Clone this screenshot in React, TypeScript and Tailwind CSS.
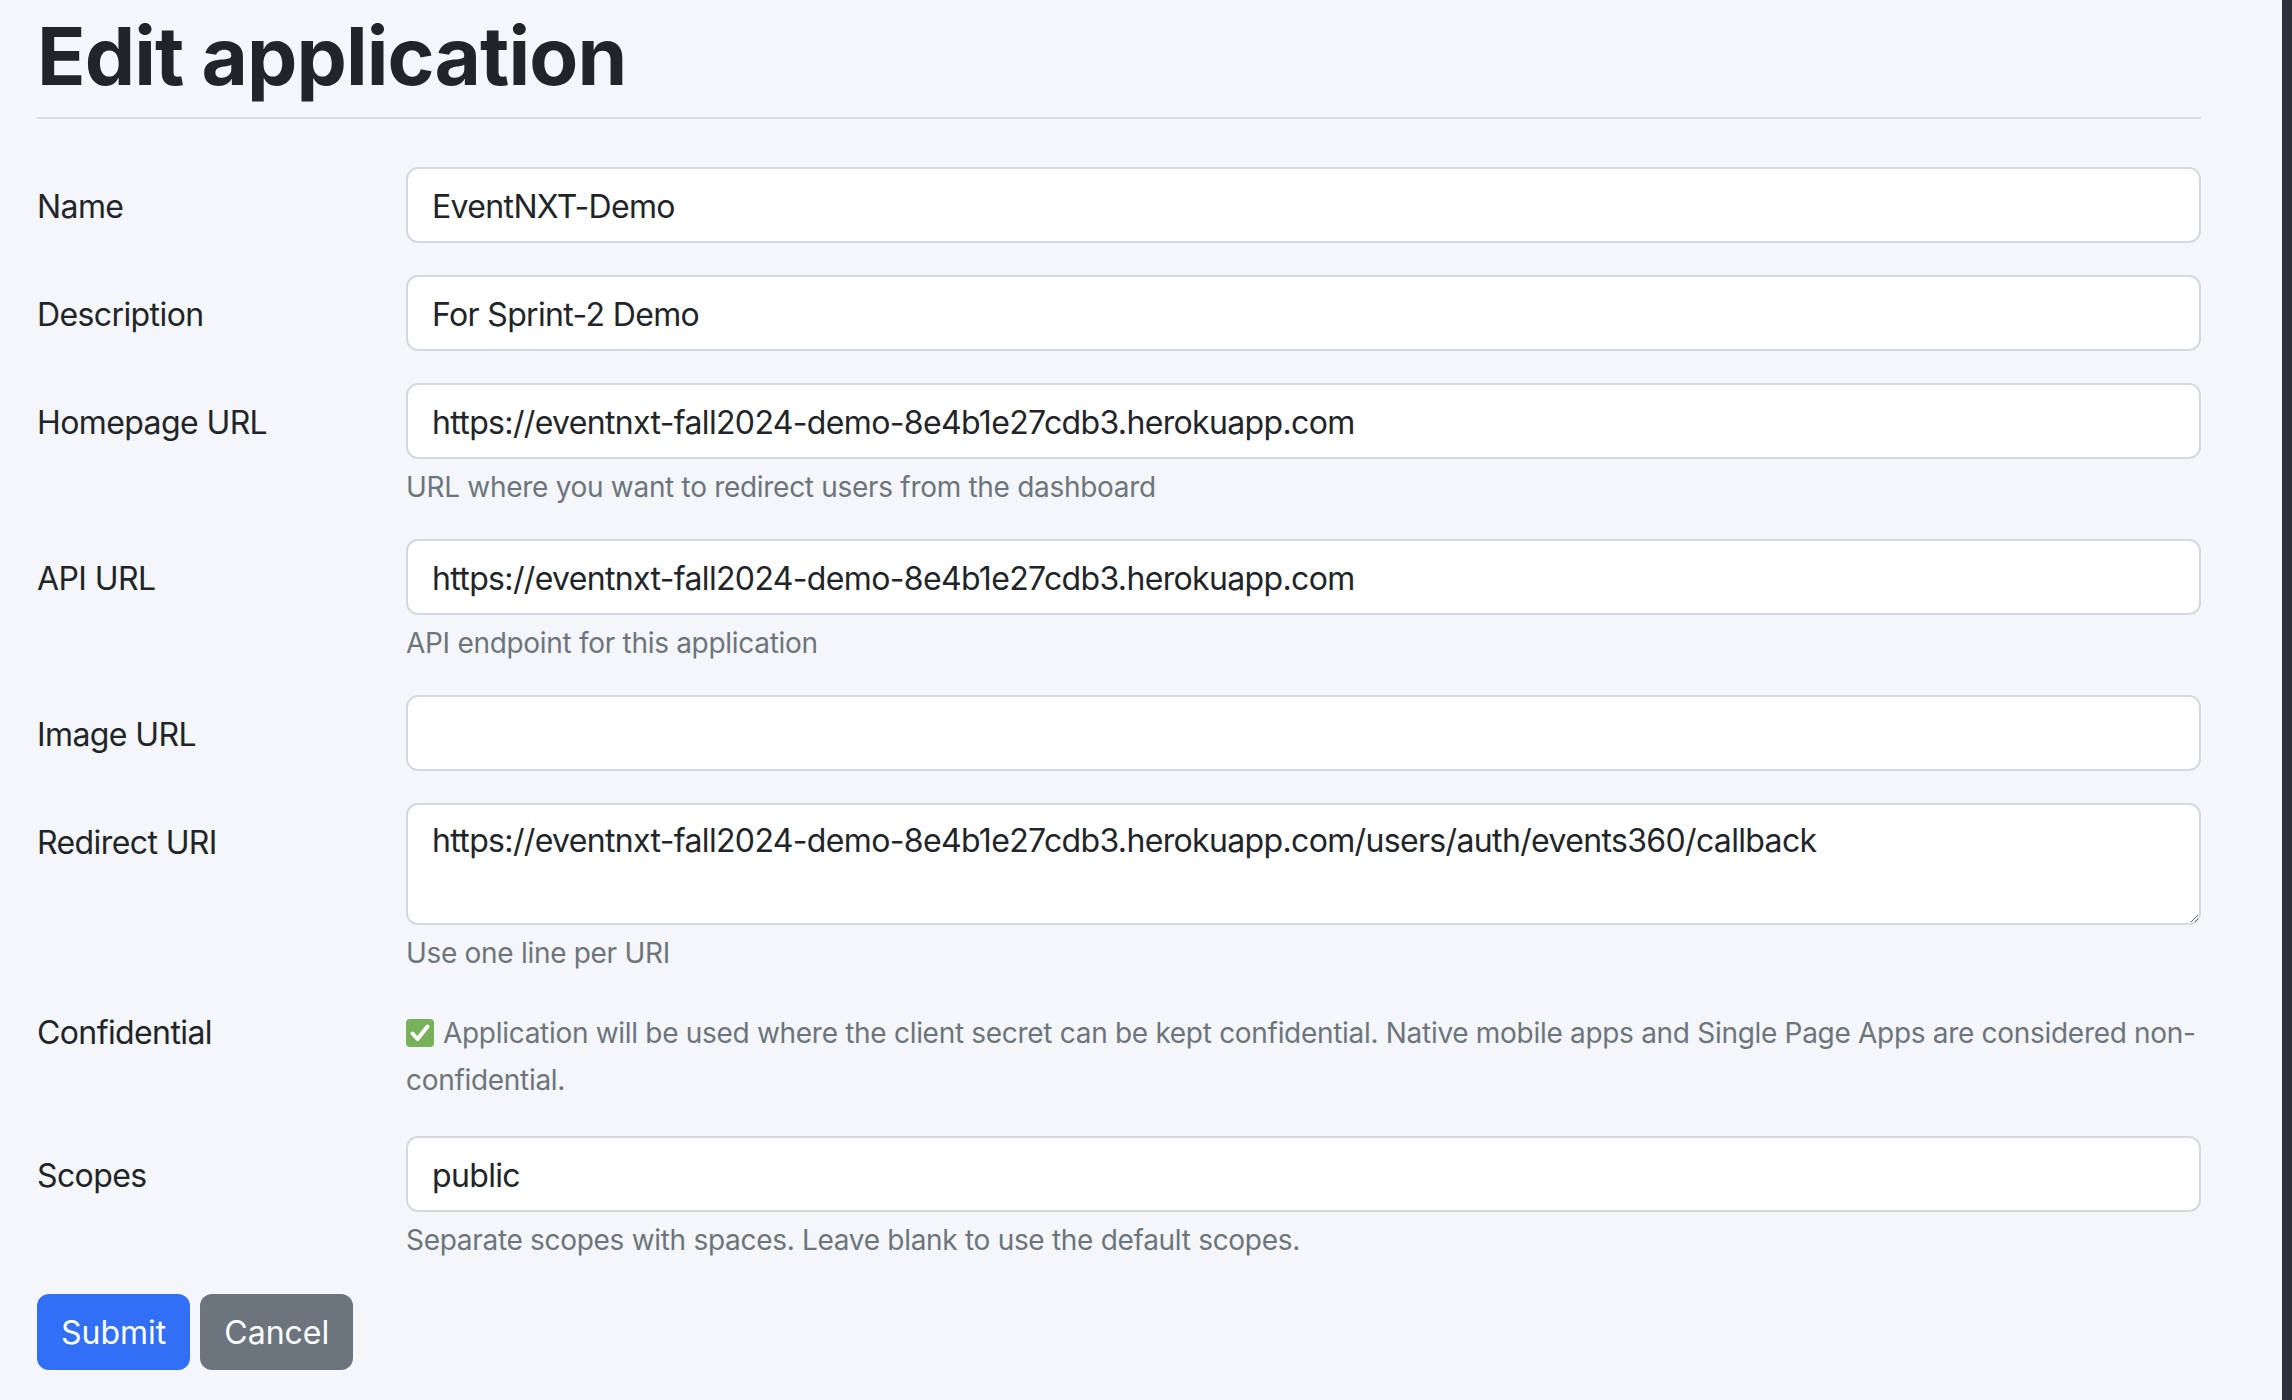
import React from "react";

const font = { fontFamily: 'Inter, "Noto Sans", sans-serif' };

function Row({
  label,
  children,
  labelTop = "pt-[16px]",
}: {
  label: string;
  children: React.ReactNode;
  labelTop?: string;
}) {
  return (
    <div className="flex items-start mb-[32px]">
      <div className={`w-[369px] shrink-0 ${labelTop} text-[32px] leading-[48px] tracking-[-0.6px] text-[#212529]`}>{label}</div>
      <div className="flex-1 min-w-0">{children}</div>
    </div>
  );
}

function TextInput({ value }: { value: string }) {
  return (
    <input
      type="text"
      defaultValue={value}
      className="block w-full h-[76px] rounded-[12px] border-2 border-[#d5d8dd] bg-white px-[24px] pt-[2px] text-[32px] leading-[48px] tracking-[-0.65px] text-[#212529] outline-none"
      style={font}
    />
  );
}

function Help({ children }: { children: React.ReactNode }) {
  return <div className="mt-[8px] text-[28px] leading-[40px] tracking-[-0.3px] text-[#6c757d]">{children}</div>;
}

function CheckEmoji() {
  return (
    <svg width="28" height="28" viewBox="0 0 28 28" className="inline-block align-[-4px] mr-[9px]">
      <rect x="0" y="0" width="28" height="28" rx="4" fill="#78b159" />
      <path d="M6.5 14.5 L11.5 20 L21.5 7.5" fill="none" stroke="#ffffff" strokeWidth="4" strokeLinecap="round" strokeLinejoin="round" />
    </svg>
  );
}

export default function App() {
  return (
    <div className="min-h-[1400px] w-full bg-[#f5f6fa] flex" style={font}>
      <div className="flex-1 pl-[37px]">
        <div className="w-[2164px]">
          <h1 className="mt-[8px] text-[80px] leading-[96px] font-bold text-[#212529] tracking-[-0.9px]">
            Edit application
          </h1>
          <div className="mt-[13px] h-[2px] bg-[#dcdee2]" />
          <form className="mt-[48px]" onSubmit={(e) => e.preventDefault()}>
            <Row label="Name">
              <TextInput value="EventNXT-Demo" />
            </Row>
            <Row label="Description">
              <TextInput value="For Sprint-2 Demo" />
            </Row>
            <Row label="Homepage URL">
              <TextInput value="https://eventnxt-fall2024-demo-8e4b1e27cdb3.herokuapp.com" />
              <Help>URL where you want to redirect users from the dashboard</Help>
            </Row>
            <Row label="API URL">
              <TextInput value="https://eventnxt-fall2024-demo-8e4b1e27cdb3.herokuapp.com" />
              <Help>API endpoint for this application</Help>
            </Row>
            <Row label="Image URL">
              <TextInput value="" />
            </Row>
            <Row label="Redirect URI">
              <textarea
                defaultValue="https://eventnxt-fall2024-demo-8e4b1e27cdb3.herokuapp.com/users/auth/events360/callback"
                className="block w-full h-[122px] rounded-[12px] border-2 border-[#d5d8dd] bg-white px-[24px] py-[12px] text-[32px] leading-[48px] tracking-[-0.65px] text-[#212529] outline-none"
                style={font}
              />
              <Help>Use one line per URI</Help>
            </Row>
            <Row label="Confidential" labelTop="pt-[4px]">
              <div className="text-[28px] leading-[47px] tracking-[-0.3px] text-[#6c757d] pt-[5px]">
                <CheckEmoji />
                Application will be used where the client secret can be kept confidential. Native mobile apps and Single Page Apps are considered non-confidential.
              </div>
            </Row>
            <Row label="Scopes">
              <TextInput value="public" />
              <Help>Separate scopes with spaces. Leave blank to use the default scopes.</Help>
            </Row>
            <div className="flex gap-[10px] pt-[2px]">
              <button
                type="submit"
                className="h-[76px] px-[24px] pt-[2px] rounded-[12px] bg-[#316ff6] text-white text-[32px] leading-[48px]"
                style={font}
              >
                Submit
              </button>
              <button
                type="button"
                className="h-[76px] px-[24px] pt-[2px] rounded-[12px] bg-[#6c757d] text-white text-[32px] leading-[48px]"
                style={font}
              >
                Cancel
              </button>
            </div>
          </form>
        </div>
      </div>
      <div className="w-[10px] shrink-0 bg-[#2e313b]" />
    </div>
  );
}
